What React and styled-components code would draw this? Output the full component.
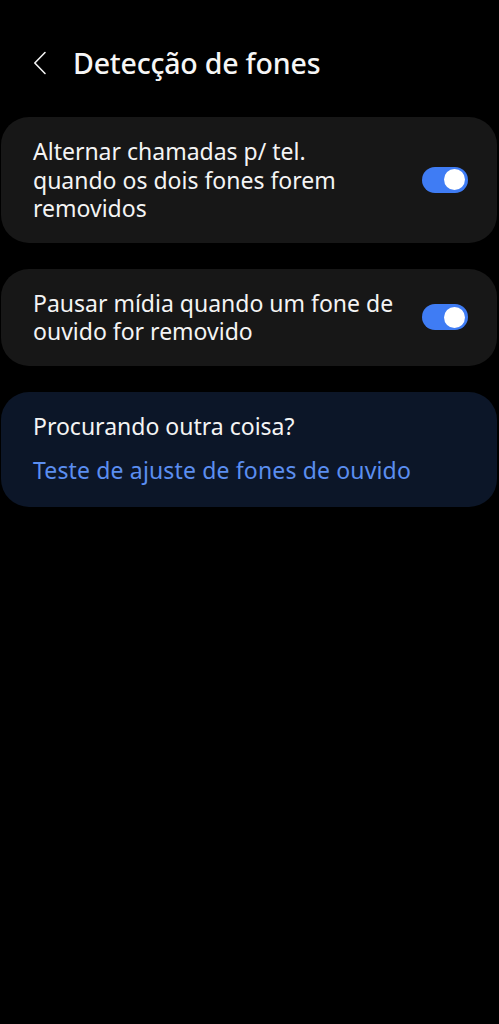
import React from 'react';
import styled, { createGlobalStyle } from 'styled-components';

const GlobalStyle = createGlobalStyle`
    html, body {
        margin: 0;
        padding: 0;
        background: #000000;
    }
    body {
        font-family: "Noto Sans", "Open Sans", sans-serif;
        color: #f4f4f4;
    }
`;

const Screen = styled.div`
    width: 499px;
    min-height: 1024px;
    background: #000000;
`;

const Header = styled.div`
    display: flex;
    align-items: center;
    height: 66px;
    padding: 30px 0 21px 33px;
`;

const BackButton = styled.button`
    display: flex;
    align-items: center;
    justify-content: center;
    width: 14px;
    height: 24px;
    padding: 0;
    margin-right: 26px;
    border: 0;
    background: none;
    cursor: pointer;
`;

const Title = styled.h1`
    margin: 0;
    font-size: 28.5px;
    font-weight: 500;
    letter-spacing: -0.2px;
    color: #f6f6f6;
`;

const List = styled.div`
    display: flex;
    flex-direction: column;
    gap: 26px;
    padding: 0 2px 0 1px;
`;

const Card = styled.div`
    display: flex;
    align-items: center;
    padding: ${props => props.padding || '20px 29px 20px 32px'};
    border-radius: 28px;
    background: ${props => props.tint ? '#0c1628' : '#171717'};
`;

const CardText = styled.div`
    flex: 1;
    max-width: 361px;
    margin-right: auto;
    font-size: 23px;
    line-height: 28.5px;
    color: #f4f4f4;
`;

const Switch = styled.div`
    position: relative;
    flex-shrink: 0;
    width: 46px;
    height: 26px;
    margin-left: 20px;
    border-radius: 13px;
    background: ${props => props.on ? '#3f7cf4' : '#5a5a5a'};
`;

const Knob = styled.div`
    position: absolute;
    top: 2.5px;
    left: ${props => props.on ? '22px' : '2.5px'};
    width: 21px;
    height: 21px;
    border-radius: 50%;
    background: #ffffff;
`;

const Suggest = styled.div`
    display: flex;
    flex-direction: column;
    gap: 16px;
`;

const SuggestTitle = styled.div`
    font-size: 23px;
    line-height: 28px;
    color: #f4f4f4;
`;

const SuggestLink = styled.a`
    font-size: 23px;
    line-height: 28px;
    letter-spacing: 0.15px;
    color: #5b8ef0;
    text-decoration: none;
    cursor: pointer;
`;

const settings = [
    { label: 'Alternar chamadas p/ tel. quando os dois fones forem removidos', on: true },
    { label: 'Pausar mídia quando um fone de ouvido for removido', on: true }
];

const Toggle = ({ on }) => (
    <Switch on={on}>
        <Knob on={on} />
    </Switch>
);

export default function App() {
    return (
        <Screen>
            <GlobalStyle />
            <Header>
                <BackButton>
                    <svg width="14" height="24" viewBox="0 0 14 24" fill="none">
                        <path d="M12 1.5L1.8 12L12 22.5" stroke="#f2f2f2" strokeWidth="1.6" strokeLinecap="round" strokeLinejoin="round" />
                    </svg>
                </BackButton>
                <Title>Detecção de fones</Title>
            </Header>
            <List>
                {settings.map((item, index) => (
                    <Card key={'setting' + index}>
                        <CardText>{item.label}</CardText>
                        <Toggle on={item.on} />
                    </Card>
                ))}
                <Card tint padding="20px 29px 23px 32px">
                    <Suggest>
                        <SuggestTitle>Procurando outra coisa?</SuggestTitle>
                        <SuggestLink>Teste de ajuste de fones de ouvido</SuggestLink>
                    </Suggest>
                </Card>
            </List>
        </Screen>
    );
}
